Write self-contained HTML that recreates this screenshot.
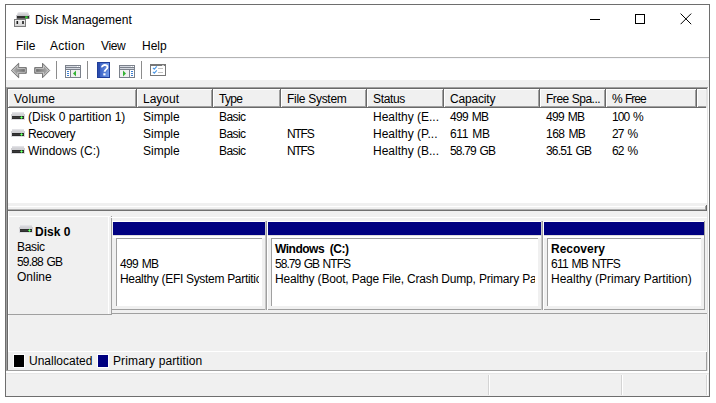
<!DOCTYPE html>
<html><head><meta charset="utf-8">
<style>
html,body{margin:0;padding:0;background:#fff;width:716px;height:403px;overflow:hidden;position:relative;}
div,span,svg{position:absolute;box-sizing:border-box;}
.t{font-family:"Liberation Sans",sans-serif;font-size:12px;line-height:15px;white-space:nowrap;color:#000;}
.b{font-weight:bold;}
.r{background:#f0f0f0;}
</style></head><body>
<!-- window frame -->
<div style="left:5px;top:4px;width:705px;height:393px;border:1px solid #6e6e6e;background:#fff;"></div>

<!-- title icon -->
<svg style="left:13px;top:11px" width="18" height="17" viewBox="0 0 18 17">
  <defs><linearGradient id="g1" x1="0" y1="0" x2="0" y2="1"><stop offset="0" stop-color="#ececee"/><stop offset="1" stop-color="#b9b9bd"/></linearGradient>
  <linearGradient id="g2" x1="0" y1="0" x2="0" y2="1"><stop offset="0" stop-color="#f4f4f4"/><stop offset="1" stop-color="#d0d0d0"/></linearGradient></defs>
  <path d="M4 5 L4.5 2 Q4.8 1 6 1 H14 Q15.2 1 15.5 2 L16 5 Z" fill="url(#g1)"/>
  <rect x="3" y="4" width="14" height="4" fill="#c4c4c8"/>
  <rect x="4" y="5" width="12" height="2.6" fill="#2e2e2e"/>
  <rect x="12.2" y="5.3" width="2.4" height="2" fill="#35d435"/>
  <rect x="1.5" y="8.5" width="11" height="7" fill="url(#g2)" stroke="#7c7c7c" stroke-width="1"/>
  <rect x="3.5" y="10" width="1.6" height="3" fill="#1e1e1e"/>
  <rect x="9.2" y="10" width="1.6" height="3" fill="#1e1e1e"/>
</svg>
<div class="t" style="left:35px;top:13px;">Disk Management</div>

<!-- window controls -->
<div style="left:590px;top:19px;width:10px;height:1px;background:#000;"></div>
<div style="left:635px;top:14px;width:10px;height:10px;border:1px solid #000;"></div>
<svg style="left:680px;top:13px" width="12" height="12" viewBox="0 0 12 12"><path d="M0.6 0.6 L11.2 11.2 M11.2 0.6 L0.6 11.2" stroke="#000" stroke-width="1"/></svg>

<!-- menu -->
<div class="t" style="left:16px;top:39px;">File</div>
<div class="t" style="left:50px;top:39px;letter-spacing:0.25px;">Action</div>
<div class="t" style="left:101px;top:39px;letter-spacing:-0.35px;">View</div>
<div class="t" style="left:142px;top:39px;">Help</div>

<!-- menu/toolbar separator -->
<div style="left:6px;top:57px;width:703px;height:1px;background:#b3b3b3;"></div>
<div style="left:6px;top:58px;width:703px;height:1px;background:#f6f7fb;"></div>

<!-- toolbar icons -->
<svg style="left:10px;top:62px" width="42" height="17" viewBox="0 0 42 17">
  <defs><linearGradient id="ga" x1="0" y1="0" x2="1" y2="0"><stop offset="0" stop-color="#b8b8b8"/><stop offset="0.7" stop-color="#7e7e7e"/><stop offset="1" stop-color="#626262"/></linearGradient>
  <linearGradient id="gb" x1="1" y1="0" x2="0" y2="0"><stop offset="0" stop-color="#b8b8b8"/><stop offset="0.7" stop-color="#7e7e7e"/><stop offset="1" stop-color="#626262"/></linearGradient></defs>
  <path d="M1.3 8.5 L8.7 1.2 V5.6 H16.3 V11.3 H8.7 V15.8 Z" fill="url(#ga)" stroke="#767676" stroke-width="1" stroke-linejoin="round"/>
  <path d="M2.8 8.5 L7.7 3.6 V6.6 H15.3 V10.3 H7.7 V13.4 Z" fill="none" stroke="#d2d2d2" stroke-width="0.8"/>
  <path d="M39.7 8.5 L32.5 1.2 V5.6 H24.7 V11.3 H32.5 V15.8 Z" fill="url(#gb)" stroke="#767676" stroke-width="1" stroke-linejoin="round"/>
  <path d="M38.2 8.5 L33.5 3.6 V6.6 H25.7 V10.3 H33.5 V13.4 Z" fill="none" stroke="#d2d2d2" stroke-width="0.8"/>
</svg>
<div style="left:56px;top:61px;width:1px;height:18px;background:#8c8c8c;"></div>
<svg style="left:65px;top:65px" width="16" height="13" viewBox="0 0 16 13" shape-rendering="crispEdges">
  <rect x="0" y="0" width="16" height="13" fill="#7b818b"/>
  <rect x="1" y="1" width="14" height="1" fill="#d4d8e0"/>
  <rect x="12" y="1" width="1" height="1" fill="#fff"/><rect x="14" y="1" width="1" height="1" fill="#fff"/>
  <rect x="1" y="3" width="14" height="1" fill="#d4d8e0"/>
  <rect x="1" y="5" width="4" height="7" fill="#fff"/>
  <rect x="6" y="5" width="9" height="7" fill="#f0f0f0"/>
  <rect x="2" y="6" width="2" height="1" fill="#3d7fd0"/><rect x="2" y="8" width="2" height="1" fill="#3d7fd0"/><rect x="2" y="10" width="2" height="1" fill="#3d7fd0"/>
  <path d="M8 8.5 L11 5.5 V11.5 Z" fill="#33b233" shape-rendering="auto"/>
</svg>
<div style="left:87px;top:61px;width:1px;height:18px;background:#8c8c8c;"></div>
<svg style="left:97px;top:62px" width="13" height="16" viewBox="0 0 13 16">
  <defs><linearGradient id="gh" x1="0" y1="0" x2="1" y2="0"><stop offset="0" stop-color="#3d64c6"/><stop offset="1" stop-color="#6f98e8"/></linearGradient></defs>
  <rect x="0" y="0" width="13" height="16" fill="#1f3d98"/>
  <rect x="3" y="1" width="9" height="14" fill="url(#gh)"/>
  <rect x="1" y="1" width="2" height="14" fill="#2a4cb0"/>
  <path d="M5.6 9.9 L5.0 10.8" stroke="none"/><path d="M5.0 5.4 C4.9 2.3 10.7 2.2 10.5 5.3 C10.4 7.3 8.0 7.4 7.5 9.7" fill="none" stroke="#2a3f80" stroke-width="1.9" opacity="0.35" transform="translate(0.6,0.5)"/><path d="M5.0 5.4 C4.9 2.3 10.7 2.2 10.5 5.3 C10.4 7.3 8.0 7.4 7.5 9.7" fill="none" stroke="#fff" stroke-width="1.9"/>
  <rect x="6.3" y="11.3" width="2.2" height="2.1" fill="#fff"/>
</svg>
<svg style="left:119px;top:65px" width="16" height="13" viewBox="0 0 16 13" shape-rendering="crispEdges">
  <rect x="0" y="0" width="16" height="13" fill="#7b818b"/>
  <rect x="1" y="1" width="14" height="1" fill="#d4d8e0"/>
  <rect x="12" y="1" width="1" height="1" fill="#fff"/><rect x="14" y="1" width="1" height="1" fill="#fff"/>
  <rect x="1" y="3" width="14" height="1" fill="#d4d8e0"/>
  <rect x="1" y="5" width="9" height="7" fill="#f0f0f0"/>
  <rect x="11" y="5" width="4" height="7" fill="#fff"/>
  <rect x="12" y="6" width="2" height="1" fill="#3d7fd0"/><rect x="12" y="8" width="2" height="1" fill="#3d7fd0"/><rect x="12" y="10" width="2" height="1" fill="#3d7fd0"/>
  <path d="M4 5.5 L7 8.5 L4 11.5 Z" fill="#33b233" shape-rendering="auto"/>
</svg>
<div style="left:141px;top:61px;width:1px;height:18px;background:#8c8c8c;"></div>
<svg style="left:150px;top:64px" width="16" height="12" viewBox="0 0 16 12">
  <rect x="0" y="0" width="16" height="12" fill="#777777" shape-rendering="crispEdges"/>
  <rect x="1" y="2" width="14" height="9" fill="#fff" shape-rendering="crispEdges"/>
  <rect x="12" y="1" width="2" height="1" fill="#cfcfcf" shape-rendering="crispEdges"/>
  <path d="M2.9 3.9 L4.3 5.2 L6.8 2.4" fill="none" stroke="#4b98e6" stroke-width="1.1"/>
  <path d="M2.9 7.9 L4.3 9.2 L6.8 6.4" fill="none" stroke="#4b98e6" stroke-width="1.1"/>
  <rect x="8" y="4" width="5" height="1" fill="#c0c0c0" shape-rendering="crispEdges"/>
  <rect x="8" y="8" width="5" height="1" fill="#c0c0c0" shape-rendering="crispEdges"/>
</svg>

<!-- gray band under toolbar -->
<div style="left:6px;top:80px;width:703px;height:7px;background:#f0f0f0;"></div>
<!-- list view frame -->
<div style="left:6px;top:87px;width:702px;height:1px;background:#a0a0a0;"></div>
<div style="left:7px;top:88px;width:700px;height:1px;background:#696969;"></div>
<div style="left:6px;top:87px;width:1px;height:284px;background:#a0a0a0;"></div>
<div style="left:7px;top:88px;width:1px;height:283px;background:#696969;"></div>
<div style="left:707px;top:88px;width:1px;height:283px;background:#e3e3e3;"></div>
<div style="left:8px;top:89px;width:699px;height:114px;background:#ffffff;"></div>
<!-- header -->
<div style="left:8px;top:89px;width:698px;height:19px;background:#f0f0f0;"></div>
<div style="left:8px;top:89px;width:698px;height:1px;background:#ffffff;"></div>
<div style="left:8px;top:106px;width:698px;height:1px;background:#a0a0a0;"></div>
<div style="left:8px;top:107px;width:698px;height:1px;background:#696969;"></div>
<div style="left:8px;top:89px;width:1px;height:18px;background:#ffffff;"></div>
<div style="left:135px;top:90px;width:1px;height:17px;background:#a0a0a0;"></div>
<div style="left:136px;top:89px;width:1px;height:19px;background:#696969;"></div>
<div style="left:137px;top:89px;width:1px;height:18px;background:#ffffff;"></div>
<div style="left:211px;top:90px;width:1px;height:17px;background:#a0a0a0;"></div>
<div style="left:212px;top:89px;width:1px;height:19px;background:#696969;"></div>
<div style="left:213px;top:89px;width:1px;height:18px;background:#ffffff;"></div>
<div style="left:279px;top:90px;width:1px;height:17px;background:#a0a0a0;"></div>
<div style="left:280px;top:89px;width:1px;height:19px;background:#696969;"></div>
<div style="left:281px;top:89px;width:1px;height:18px;background:#ffffff;"></div>
<div style="left:365px;top:90px;width:1px;height:17px;background:#a0a0a0;"></div>
<div style="left:366px;top:89px;width:1px;height:19px;background:#696969;"></div>
<div style="left:367px;top:89px;width:1px;height:18px;background:#ffffff;"></div>
<div style="left:442px;top:90px;width:1px;height:17px;background:#a0a0a0;"></div>
<div style="left:443px;top:89px;width:1px;height:19px;background:#696969;"></div>
<div style="left:444px;top:89px;width:1px;height:18px;background:#ffffff;"></div>
<div style="left:538px;top:90px;width:1px;height:17px;background:#a0a0a0;"></div>
<div style="left:539px;top:89px;width:1px;height:19px;background:#696969;"></div>
<div style="left:540px;top:89px;width:1px;height:18px;background:#ffffff;"></div>
<div style="left:604px;top:90px;width:1px;height:17px;background:#a0a0a0;"></div>
<div style="left:605px;top:89px;width:1px;height:19px;background:#696969;"></div>
<div style="left:606px;top:89px;width:1px;height:18px;background:#ffffff;"></div>
<div style="left:695px;top:90px;width:1px;height:17px;background:#a0a0a0;"></div>
<div style="left:696px;top:89px;width:1px;height:19px;background:#696969;"></div>
<div style="left:697px;top:89px;width:1px;height:18px;background:#ffffff;"></div>
<div style="left:706px;top:89px;width:1px;height:19px;background:#e3e3e3;"></div>
<div class="t" style="left:14px;top:92px;letter-spacing:0.2px;">Volume</div>
<div class="t" style="left:143px;top:92px;">Layout</div>
<div class="t" style="left:219px;top:92px;letter-spacing:-0.7px;">Type</div>
<div class="t" style="left:287px;top:92px;letter-spacing:-0.29px;">File System</div>
<div class="t" style="left:373px;top:92px;letter-spacing:-0.34px;">Status</div>
<div class="t" style="left:450px;top:92px;letter-spacing:-0.18px;">Capacity</div>
<div class="t" style="left:546px;top:92px;letter-spacing:-0.47px;">Free Spa...</div>
<div class="t" style="left:612px;top:92px;letter-spacing:-1.0px;word-spacing:1px;">% Free</div>

<!-- rows -->
<svg style="left:11px;top:112px" width="14" height="8" viewBox="0 0 14 8" shape-rendering="crispEdges"><rect x="1" y="0" width="12" height="4" fill="#d6d6da"/><rect x="1" y="0" width="12" height="1" fill="#e2e2e6"/><rect x="0" y="2" width="14" height="6" fill="#dcdce0"/><rect x="0" y="2" width="14" height="2" fill="#d0d0d4"/><rect x="1" y="4" width="12" height="3" fill="#2c2c2c"/><rect x="1" y="5" width="12" height="1" fill="#3a3a3a"/><rect x="9" y="5" width="3" height="1" fill="#44d844"/><rect x="10" y="4" width="1" height="3" fill="#44d844"/><rect x="10" y="5" width="1" height="1" fill="#7dff7d"/></svg>
<div class="t" style="left:28px;top:110px;">(Disk 0 partition 1)</div>
<div class="t" style="left:143px;top:110px;">Simple</div>
<div class="t" style="left:219px;top:110px;letter-spacing:-0.6px;">Basic</div>
<div class="t" style="left:373px;top:110px;">Healthy (E...</div>
<div class="t" style="left:450px;top:110px;letter-spacing:-0.72px;word-spacing:1.2px;">499 MB</div>
<div class="t" style="left:546px;top:110px;letter-spacing:-0.72px;word-spacing:1.2px;">499 MB</div>
<div class="t" style="left:612px;top:110px;letter-spacing:-0.9px;word-spacing:1.2px;">100 %</div>
<svg style="left:11px;top:129px" width="14" height="8" viewBox="0 0 14 8" shape-rendering="crispEdges"><rect x="1" y="0" width="12" height="4" fill="#d6d6da"/><rect x="1" y="0" width="12" height="1" fill="#e2e2e6"/><rect x="0" y="2" width="14" height="6" fill="#dcdce0"/><rect x="0" y="2" width="14" height="2" fill="#d0d0d4"/><rect x="1" y="4" width="12" height="3" fill="#2c2c2c"/><rect x="1" y="5" width="12" height="1" fill="#3a3a3a"/><rect x="9" y="5" width="3" height="1" fill="#44d844"/><rect x="10" y="4" width="1" height="3" fill="#44d844"/><rect x="10" y="5" width="1" height="1" fill="#7dff7d"/></svg>
<div class="t" style="left:28px;top:127px;letter-spacing:-0.44px;">Recovery</div>
<div class="t" style="left:143px;top:127px;">Simple</div>
<div class="t" style="left:219px;top:127px;letter-spacing:-0.6px;">Basic</div>
<div class="t" style="left:287px;top:127px;letter-spacing:-1.2px;">NTFS</div>
<div class="t" style="left:373px;top:127px;">Healthy (P...</div>
<div class="t" style="left:450px;top:127px;letter-spacing:-0.34px;word-spacing:1.2px;">611 MB</div>
<div class="t" style="left:546px;top:127px;letter-spacing:-0.54px;word-spacing:1.2px;">168 MB</div>
<div class="t" style="left:612px;top:127px;letter-spacing:-0.8px;word-spacing:1.2px;">27 %</div>
<svg style="left:11px;top:146px" width="14" height="8" viewBox="0 0 14 8" shape-rendering="crispEdges"><rect x="1" y="0" width="12" height="4" fill="#d6d6da"/><rect x="1" y="0" width="12" height="1" fill="#e2e2e6"/><rect x="0" y="2" width="14" height="6" fill="#dcdce0"/><rect x="0" y="2" width="14" height="2" fill="#d0d0d4"/><rect x="1" y="4" width="12" height="3" fill="#2c2c2c"/><rect x="1" y="5" width="12" height="1" fill="#3a3a3a"/><rect x="9" y="5" width="3" height="1" fill="#44d844"/><rect x="10" y="4" width="1" height="3" fill="#44d844"/><rect x="10" y="5" width="1" height="1" fill="#7dff7d"/></svg>
<div class="t" style="left:28px;top:144px;">Windows (C:)</div>
<div class="t" style="left:143px;top:144px;">Simple</div>
<div class="t" style="left:219px;top:144px;letter-spacing:-0.6px;">Basic</div>
<div class="t" style="left:287px;top:144px;letter-spacing:-1.2px;">NTFS</div>
<div class="t" style="left:373px;top:144px;">Healthy (B...</div>
<div class="t" style="left:450px;top:144px;letter-spacing:-0.83px;word-spacing:1.2px;">58.79 GB</div>
<div class="t" style="left:546px;top:144px;letter-spacing:-0.83px;word-spacing:1.2px;">36.51 GB</div>
<div class="t" style="left:612px;top:144px;letter-spacing:-0.8px;word-spacing:1.2px;">62 %</div>

<!-- splitter -->
<div style="left:8px;top:203px;width:699px;height:3px;background:#f0f0f0;"></div>
<div style="left:8px;top:206px;width:699px;height:1px;background:#ffffff;"></div>
<div style="left:8px;top:207px;width:699px;height:2px;background:#f0f0f0;"></div>
<div style="left:8px;top:209px;width:699px;height:1px;background:#b4b4b4;"></div>
<div style="left:8px;top:210px;width:699px;height:1px;background:#707070;"></div>
<div style="left:706px;top:205px;width:1px;height:6px;background:#696969;"></div>
<div style="left:705px;top:206px;width:1px;height:4px;background:#a0a0a0;"></div>
<!-- lower pane -->
<div style="left:8px;top:211px;width:699px;height:140px;background:#f0f0f0;"></div>
<div style="left:8px;top:211px;width:1px;height:160px;background:#ffffff;"></div>
<div style="left:9px;top:216px;width:101px;height:1px;background:#ffffff;"></div>
<div style="left:108px;top:217px;width:1px;height:97px;background:#ffffff;"></div>
<div style="left:111px;top:218px;width:1px;height:97px;background:#a0a0a0;"></div>
<div style="left:111px;top:216px;width:1px;height:1px;background:#a0a0a0;"></div>
<div style="left:111px;top:217px;width:1px;height:1px;background:#ffffff;"></div>
<div style="left:8px;top:314px;width:104px;height:1px;background:#a0a0a0;"></div>
<svg style="left:19px;top:225px" width="14" height="8" viewBox="0 0 14 8" shape-rendering="crispEdges"><rect x="1" y="0" width="12" height="4" fill="#d6d6da"/><rect x="1" y="0" width="12" height="1" fill="#e2e2e6"/><rect x="0" y="2" width="14" height="6" fill="#dcdce0"/><rect x="0" y="2" width="14" height="2" fill="#d0d0d4"/><rect x="1" y="4" width="12" height="3" fill="#2c2c2c"/><rect x="1" y="5" width="12" height="1" fill="#3a3a3a"/><rect x="9" y="5" width="3" height="1" fill="#44d844"/><rect x="10" y="4" width="1" height="3" fill="#44d844"/><rect x="10" y="5" width="1" height="1" fill="#7dff7d"/></svg>
<div class="t b" style="left:35px;top:225px;">Disk 0</div>
<div class="t" style="left:17px;top:240px;letter-spacing:-0.35px;">Basic</div>
<div class="t" style="left:17px;top:255px;letter-spacing:-0.83px;word-spacing:1.2px;">59.88 GB</div>
<div class="t" style="left:17px;top:270px;">Online</div>
<div style="left:112px;top:217px;width:595px;height:1px;background:#ffffff;"></div>
<div style="left:112px;top:221px;width:592px;height:1px;background:#ffffff;"></div>
<div style="left:112px;top:309px;width:593px;height:1px;background:#a0a0a0;"></div>
<div style="left:704px;top:221px;width:1px;height:89px;background:#a0a0a0;"></div>
<div style="left:112px;top:313px;width:595px;height:1px;background:#a0a0a0;"></div>
<div style="left:113px;top:222px;width:152px;height:13px;background:#000080;"></div>
<div style="left:113px;top:235px;width:152px;height:1px;background:#dcdcdc;"></div>
<div style="left:113px;top:236px;width:152px;height:2px;background:#ffffff;"></div>
<div style="left:116px;top:238px;width:146px;height:1px;background:#a0a0a0;"></div>
<div style="left:116px;top:238px;width:1px;height:68px;background:#a0a0a0;"></div>
<div style="left:117px;top:239px;width:145px;height:67px;background:#ffffff;"></div>
<div style="left:265px;top:221px;width:1px;height:89px;background:#c8c8c8;"></div>
<div style="left:266px;top:221px;width:1px;height:89px;background:#a0a0a0;"></div>
<div style="left:267px;top:221px;width:1px;height:89px;background:#ffffff;"></div>
<div style="left:268px;top:222px;width:273px;height:13px;background:#000080;"></div>
<div style="left:268px;top:235px;width:273px;height:1px;background:#dcdcdc;"></div>
<div style="left:268px;top:236px;width:273px;height:2px;background:#ffffff;"></div>
<div style="left:271px;top:238px;width:267px;height:1px;background:#a0a0a0;"></div>
<div style="left:271px;top:238px;width:1px;height:68px;background:#a0a0a0;"></div>
<div style="left:272px;top:239px;width:266px;height:67px;background:#ffffff;"></div>
<div style="left:541px;top:221px;width:1px;height:89px;background:#c8c8c8;"></div>
<div style="left:542px;top:221px;width:1px;height:89px;background:#a0a0a0;"></div>
<div style="left:543px;top:221px;width:1px;height:89px;background:#ffffff;"></div>
<div style="left:544px;top:222px;width:160px;height:13px;background:#000080;"></div>
<div style="left:544px;top:235px;width:160px;height:1px;background:#dcdcdc;"></div>
<div style="left:544px;top:236px;width:160px;height:2px;background:#ffffff;"></div>
<div style="left:547px;top:238px;width:154px;height:1px;background:#a0a0a0;"></div>
<div style="left:547px;top:238px;width:1px;height:68px;background:#a0a0a0;"></div>
<div style="left:548px;top:239px;width:153px;height:67px;background:#ffffff;"></div>
<div style="left:117px;top:239px;width:142px;height:66px;overflow:hidden;">
  <div class="t" style="left:3px;top:18px;letter-spacing:-0.72px;word-spacing:1.2px;">499 MB</div>
  <div class="t" style="left:3px;top:33px;letter-spacing:-0.31px;">Healthy (EFI System Partition)</div>
</div>
<div style="left:272px;top:239px;width:263px;height:66px;overflow:hidden;">
  <div class="t b" style="left:3px;top:3px;letter-spacing:-0.5px;">Windows&nbsp; (C:)</div>
  <div class="t" style="left:3px;top:18px;letter-spacing:-0.98px;word-spacing:1.2px;">58.79 GB NTFS</div>
  <div class="t" style="left:3px;top:33px;letter-spacing:-0.18px;">Healthy (Boot, Page File, Crash Dump, Primary Partition)</div>
</div>
<div style="left:548px;top:239px;width:152px;height:66px;overflow:hidden;">
  <div class="t b" style="left:3px;top:3px;">Recovery</div>
  <div class="t" style="left:3px;top:18px;letter-spacing:-0.77px;word-spacing:1.2px;">611 MB NTFS</div>
  <div class="t" style="left:3px;top:33px;">Healthy (Primary Partition)</div>
</div>
<!-- legend -->
<div style="left:8px;top:351px;width:699px;height:1px;background:#ffffff;"></div>
<div style="left:8px;top:352px;width:698px;height:18px;background:#f0f0f0;"></div>
<div style="left:706px;top:352px;width:1px;height:19px;background:#a0a0a0;"></div>
<div style="left:7px;top:370px;width:700px;height:1px;background:#a0a0a0;"></div>
<div style="left:13px;top:354px;width:12px;height:14px;background:#ffffff;"></div>
<div style="left:14px;top:355px;width:10px;height:12px;background:#000000;"></div>
<div class="t" style="left:29px;top:354px;">Unallocated</div>
<div style="left:97px;top:354px;width:12px;height:14px;background:#ffffff;"></div>
<div style="left:98px;top:355px;width:10px;height:12px;background:#000080;"></div>
<div class="t" style="left:113px;top:354px;letter-spacing:0.12px;">Primary partition</div>
<!-- status bar -->
<div style="left:6px;top:371px;width:703px;height:25px;background:#f0f0f0;"></div>
<div style="left:6px;top:371px;width:703px;height:2px;background:#ffffff;"></div>
<div style="left:6px;top:373px;width:703px;height:1px;background:#e6e6e6;"></div>
<div style="left:488px;top:375px;width:1px;height:20px;background:#d4d4d4;"></div>
<div style="left:489px;top:375px;width:1px;height:20px;background:#ffffff;"></div>
<div style="left:621px;top:375px;width:1px;height:20px;background:#d4d4d4;"></div>
<div style="left:622px;top:375px;width:1px;height:20px;background:#ffffff;"></div>
<div style="left:706px;top:375px;width:1px;height:20px;background:#d4d4d4;"></div>
<div style="left:707px;top:375px;width:1px;height:20px;background:#ffffff;"></div>
</body></html>
